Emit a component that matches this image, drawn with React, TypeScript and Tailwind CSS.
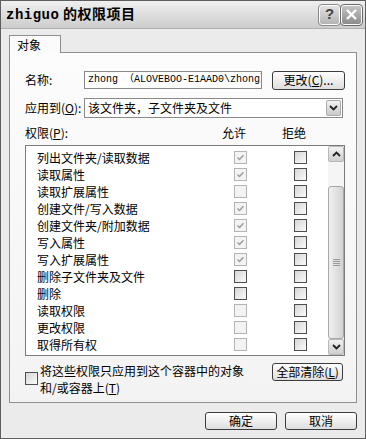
import React from 'react';

const cjk = "font-['Noto_Sans_CJK_SC','Noto_Sans',sans-serif]";

type Perm = { name: string; allow: 'on' | 'off' | 'dim-on' | 'dim-off' };

const perms: Perm[] = [
  { name: '列出文件夹/读取数据', allow: 'dim-on' },
  { name: '读取属性', allow: 'dim-on' },
  { name: '读取扩展属性', allow: 'dim-off' },
  { name: '创建文件/写入数据', allow: 'dim-on' },
  { name: '创建文件夹/附加数据', allow: 'dim-on' },
  { name: '写入属性', allow: 'dim-on' },
  { name: '写入扩展属性', allow: 'dim-on' },
  { name: '删除子文件夹及文件', allow: 'off' },
  { name: '删除', allow: 'off' },
  { name: '读取权限', allow: 'dim-off' },
  { name: '更改权限', allow: 'dim-off' },
  { name: '取得所有权', allow: 'dim-off' },
];

function Check({ state }: { state: 'on' | 'off' | 'dim-on' | 'dim-off' }) {
  const dim = state.startsWith('dim');
  const checked = state.endsWith('on');
  return (
    <div
      className={`w-[13px] h-[13px] shrink-0 border ${
        dim ? 'border-[#b4b4b4] bg-[#f3f3f3]' : 'border-[#4e4e4e] bg-linear-to-br from-[#d6d6d6] to-[#fbfbfb]'
      }`}
    >
      {checked && (
        <svg width="11" height="11" viewBox="0 0 11 11">
          <path d="M2.5 5.5 L4.5 7.5 L8.5 3.2" fill="none" stroke={dim ? '#9d9d9d' : '#333'} strokeWidth="1.5" />
        </svg>
      )}
    </div>
  );
}

function Btn({ children, className = '' }: { children: React.ReactNode; className?: string }) {
  return (
    <div
      className={`flex items-center justify-center rounded-[3px] border border-[#3c3c3c] bg-linear-to-b from-[#ffffff] to-[#dedede] text-[12px] text-black leading-none ${cjk} ${className}`}
    >
      {children}
    </div>
  );
}

function Chevron({ up }: { up?: boolean }) {
  return (
    <svg width="9" height="6" viewBox="0 0 9 6">
      <path d={up ? 'M1 5 L4.5 1.5 L8 5' : 'M1 1 L4.5 4.5 L8 1'} fill="none" stroke="#222" strokeWidth="1.8" />
    </svg>
  );
}

export default function App() {
  return (
    <div className={`w-[366px] h-[439px] flex flex-col bg-[#ebebeb] border border-[#5e5e5e] ${cjk}`}>
      {/* Title bar */}
      <div className="h-[28px] shrink-0 flex items-center pl-[5px] pr-[3px] bg-linear-to-b from-[#f0f0f0] via-[#dedede] to-[#cdcdcd] border-b border-[#b0b0b0]">
        <span className="text-[14px] font-bold text-black tracking-[0.5px]">
          <span className="font-['Liberation_Mono',monospace]">zhiguo</span> 的权限项目
        </span>
        <div className="ml-auto flex gap-[1px]">
          <div className="w-[21px] h-[20px] rounded-[3px] border border-[#fdfdfd] outline outline-[#8a8a8a] bg-linear-to-b from-[#e2e2e2] to-[#b4b4b4] flex items-center justify-center text-[15px] font-bold text-[#444] font-['Liberation_Sans',sans-serif]">
            ?
          </div>
          <div className="w-[21px] h-[20px] rounded-[3px] border border-[#fdfdfd] outline outline-[#6a6a6a] bg-linear-to-b from-[#c4c4c4] to-[#8c8c8c] flex items-center justify-center">
            <svg width="13" height="13" viewBox="0 0 13 13">
              <path d="M2 2 L11 11 M11 2 L2 11" stroke="#fff" strokeWidth="2.4" />
            </svg>
          </div>
        </div>
      </div>

      {/* Body */}
      <div className="flex-1 flex flex-col px-[8px] pt-[6px]">
        {/* Tab */}
        <div className="flex">
          <div className="relative z-10 -mb-px w-[52px] h-[18px] border border-b-0 border-[#8e8e8e] bg-[#fbfbfb] text-[12px] text-black pl-[7px] pt-[1px] leading-[15px]">
            对象
          </div>
        </div>

        {/* Panel */}
        <div className="h-[351px] border border-[#8e8e8e] bg-linear-to-b from-[#fcfcfc] to-[#f3f3f3] pl-[15px] pr-[11px] pt-[18px] flex flex-col text-[12px] text-black">
          {/* Name row */}
          <div className="h-[18px] flex items-center">
            <span className="w-[59px]">名称:</span>
            <div className="w-[178px] h-[18px] border border-[#8a8a8a] bg-white overflow-hidden whitespace-nowrap pl-[3px] leading-[16px] text-[10px] font-['Liberation_Mono','Noto_Sans_CJK_SC',monospace]">
              zhong （ALOVEBOO-E1AAD0\zhong）
            </div>
            <Btn className="ml-auto w-[73px] h-[19px]">
              更改(<span className="underline">C</span>)...
            </Btn>
          </div>

          {/* Apply to */}
          <div className="mt-[9px] h-[20px] flex items-center">
            <span className="w-[59px] whitespace-nowrap">
              应用到(<span className="underline">O</span>):
            </span>
            <div className="w-[259px] h-[20px] border border-[#8a8a8a] bg-white flex items-center pl-[3px] pr-[1px]">
              <span>该文件夹，子文件夹及文件</span>
              <div className="ml-auto w-[15px] h-[16px] rounded-[2px] border border-[#aaa] bg-linear-to-b from-[#f4f4f4] to-[#c9c9c9] flex items-center justify-center">
                <Chevron />
              </div>
            </div>
          </div>

          {/* Header */}
          <div className="mt-[6px] h-[18px] flex items-center">
            <span className="w-[197px]">
              权限(<span className="underline">P</span>):
            </span>
            <span className="w-[60px]">允许</span>
            <span>拒绝</span>
          </div>

          {/* List */}
          <div className="mt-[3px] h-[211px] border border-[#7c7c7c] bg-white flex">
            <div className="flex-1 pt-[3px] pl-[11px]">
              {perms.map(p => (
                <div key={p.name} className="h-[17px] flex items-center">
                  <span className="w-[197px] whitespace-nowrap">{p.name}</span>
                  <Check state={p.allow} />
                  <div className="w-[47px]" />
                  <Check state="off" />
                </div>
              ))}
            </div>
            {/* Scrollbar */}
            <div className="w-[16px] flex flex-col bg-[#f5f5f5]">
              <div className="h-[16px] rounded-[2px] border border-[#b8b8b8] bg-linear-to-b from-[#f2f2f2] to-[#cfcfcf] flex items-center justify-center">
                <Chevron up />
              </div>
              <div className="h-[24px]" />
              <div className="flex-1 rounded-[3px] border border-[#a8a8a8] bg-linear-to-r from-[#f0f0f0] via-[#e2e2e2] to-[#d2d2d2] flex items-center justify-center">
                <div className="flex flex-col gap-[1px]">
                  <div className="w-[7px] h-px bg-[#9a9a9a]" />
                  <div className="w-[7px] h-px bg-[#9a9a9a]" />
                  <div className="w-[7px] h-px bg-[#9a9a9a]" />
                  <div className="w-[7px] h-px bg-[#9a9a9a]" />
                </div>
              </div>
              <div className="h-[16px] rounded-[2px] border border-[#b8b8b8] bg-linear-to-b from-[#f2f2f2] to-[#cfcfcf] flex items-center justify-center">
                <Chevron />
              </div>
            </div>
          </div>

          {/* Bottom row */}
          <div className="mt-[7px] flex items-start">
            <div className="mt-[9px]">
              <Check state="off" />
            </div>
            <div className="ml-[2px] flex flex-col">
              <span className="h-[16px] leading-[16px]">将这些权限只应用到这个容器中的对象</span>
              <span className="h-[17px] leading-[17px]">
                和/或容器上(<span className="underline">T</span>)
              </span>
            </div>
            <Btn className="ml-auto mr-[2px] w-[71px] h-[18px]">
              全部清除(<span className="underline">L</span>)
            </Btn>
          </div>
        </div>

        {/* Dialog buttons */}
        <div className="mt-[9px] flex justify-end gap-[8px]">
          <Btn className="w-[72px] h-[18px]">确定</Btn>
          <Btn className="w-[72px] h-[18px]">取消</Btn>
        </div>
      </div>
    </div>
  );
}
